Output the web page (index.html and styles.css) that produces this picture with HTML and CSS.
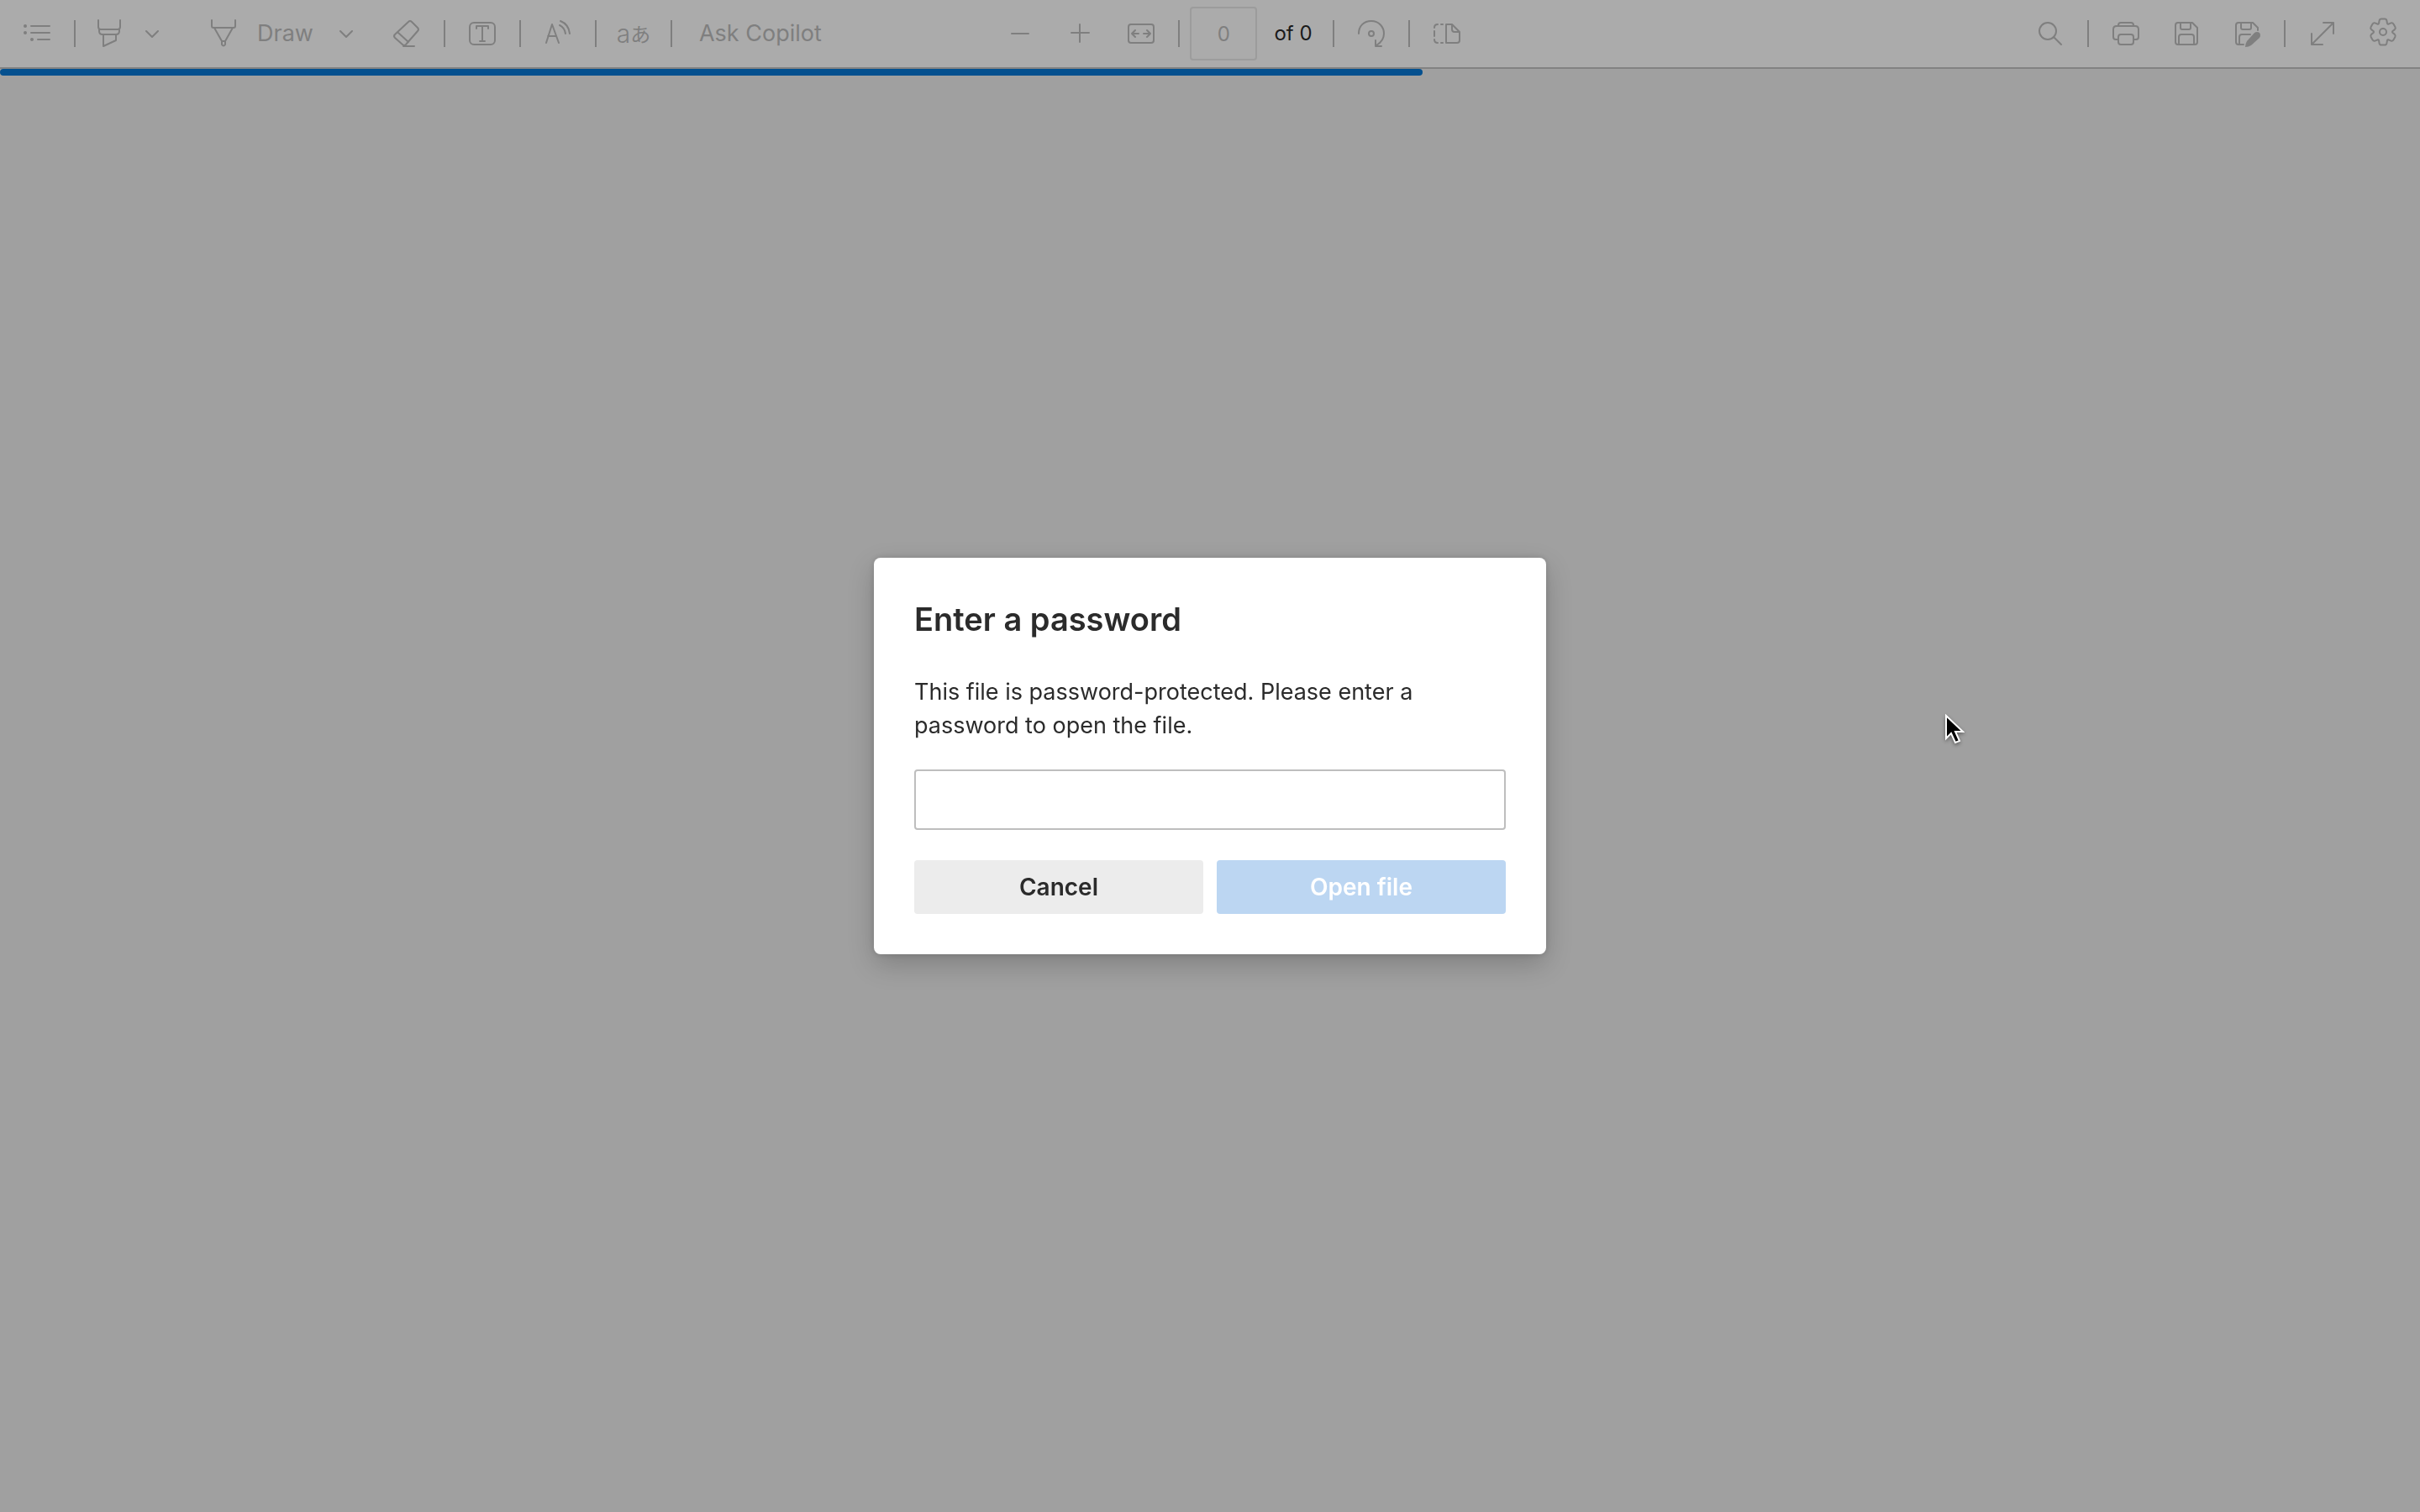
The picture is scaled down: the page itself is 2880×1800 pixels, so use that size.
FILE: index.html
```html
<!DOCTYPE html>
<html lang="en">
<head>
<meta charset="utf-8">
<title>PDF viewer</title>
<link rel="stylesheet" href="styles.css">
</head>
<body>
<header class="toolbar">
  <div class="group group-left">
    <button class="tool list-tool" aria-label="Table of contents" disabled><svg class="icon" viewBox="0 0 32 32"><path d="M9 7h22M9 15h22M17 23h14"/><g class="solid"><circle cx="2" cy="7" r="2"/><circle cx="2" cy="15" r="2"/><circle cx="10" cy="23" r="2"/></g></svg></button>
    <span class="divider divider-narrow"></span>
    <button class="tool" aria-label="Highlight" disabled><svg class="icon" viewBox="0 0 32 32"><path d="M3 0v8q0 3 3 3h20q3 0 3-3V0M4 11v2q0 4 4 4h16q4 0 4-4v-2M9 17v14l15-7v-7"/></svg></button>
    <button class="tool chevron-tool" aria-label="Highlight options" disabled><svg class="chevron" viewBox="0 0 14 14"><path d="M0 4l7 7 7-7"/></svg></button>
    <button class="tool draw-tool" disabled><svg class="icon" viewBox="0 0 32 32"><path d="M2 0v7q0 2 2 2h24q2 0 2-2V0M5 9l9 16h4l9-16M14 25v4q2 3 4 0v-4"/></svg><span>Draw</span></button>
    <button class="tool chevron-tool" aria-label="Draw options" disabled><svg class="chevron" viewBox="0 0 14 14"><path d="M0 4l7 7 7-7"/></svg></button>
    <button class="tool eraser-tool" aria-label="Erase" disabled><svg class="icon" viewBox="0 0 32 32"><path d="M18 2q2-2 4 0l7 7q2 2 0 4L15 29q-2 2-4 0l-9-8q-2-2 0-4zM6 15l12 11M12 31h13"/></svg></button>
    <span class="divider"></span>
    <button class="tool" aria-label="Add text" disabled><svg class="icon" viewBox="0 0 32 32"><rect x="1" y="3" width="30" height="26" rx="5"/><path d="M9 10V7h14v3M16 7v18M13 25h6"/></svg></button>
    <span class="divider"></span>
    <button class="tool" aria-label="Read aloud" disabled><svg class="icon" viewBox="0 0 32 32"><path d="M2 27L9 5l8 22M4 19h10M18 6q6 3 7 10M19 1q10 4 11 15"/></svg></button>
    <span class="divider"></span>
    <button class="tool translate-tool" aria-label="Translate" disabled><span class="latin">a</span><span class="kana" lang="ja">あ</span></button>
    <span class="divider"></span>
    <button class="tool copilot-tool" disabled>Ask Copilot</button>
  </div>
  <div class="group group-center">
    <div class="spaced">
      <button class="tool" aria-label="Zoom out" disabled><svg class="icon" viewBox="0 0 32 32"><path d="M6 16h20"/></svg></button>
      <button class="tool" aria-label="Zoom in" disabled><svg class="icon" viewBox="0 0 32 32"><path d="M5 15h21M15 5v21"/></svg></button>
      <button class="tool" aria-label="Fit to width" disabled><svg class="icon" viewBox="0 0 32 32"><rect x="1" y="5" width="30" height="22" rx="3"/><path d="M13 16H5M9 12l-4 4 4 4M19 16h8M23 12l4 4-4 4"/></svg></button>
    </div>
    <span class="divider divider-page"></span>
    <label class="page-field"><input class="page-input" type="text" value="0" aria-label="Page number" disabled><span>of 0</span></label>
    <span class="divider divider-wide"></span>
    <button class="tool" aria-label="Rotate" disabled><svg class="icon" viewBox="0 0 32 32"><path d="M1 16C1 7 7 1 16 1c9 0 15 7 15 15 0 6-4 11-9 14M21 24v7h7"/><circle cx="16" cy="16" r="3"/></svg></button>
    <span class="divider"></span>
    <button class="tool" aria-label="Page view" disabled><svg class="icon" viewBox="0 0 32 32"><path d="M15 5h7l9 9v10q0 3-3 3H15zM22 5v6q0 3 3 3h6M11 5h-2M5 5q-4 0-4 4M1 13v6M1 23q0 4 4 4M9 27h2"/></svg></button>
  </div>
  <div class="group group-right">
    <button class="tool" aria-label="Find" disabled><svg class="icon" viewBox="0 0 32 32"><circle cx="13" cy="13" r="10"/><path d="M20 20l9 9"/></svg></button>
    <span class="divider"></span>
    <div class="spaced">
      <button class="tool" aria-label="Print" disabled><svg class="icon" viewBox="0 0 32 32"><path d="M7 7V6q0-3 3-3h12q3 0 3 3v1M7 23H4q-3 0-3-3v-9q0-4 4-4h22q4 0 4 4v9q0 3-3 3h-3"/><rect x="7" y="17" width="18" height="12" rx="3"/></svg></button>
      <button class="tool" aria-label="Save" disabled><svg class="icon" viewBox="0 0 32 32"><path d="M6 3h17l6 6v17q0 3-3 3H6q-3 0-3-3V6q0-3 3-3zM9 3v6q0 2 2 2h8q2 0 2-2V3M7 29V20q0-3 3-3h12q3 0 3 3v9"/></svg></button>
      <button class="tool" aria-label="Save as" disabled><svg class="icon" viewBox="0 0 32 32"><path d="M12 29H6q-3 0-3-3V6q0-3 3-3h17l6 6v3M9 3v6q0 2 2 2h8q2 0 2-2V3M7 29V20q0-3 3-3h10"/><path class="solid" d="M25 15q3-2 6 0 2 3 0 6L21 30q-3 2-7 2 0-4 2-7z"/></svg></button>
    </div>
    <span class="divider"></span>
    <div class="spaced">
      <button class="tool" aria-label="Full screen" disabled><svg class="icon" viewBox="0 0 32 32"><path d="M17 3h12v13M3 16v13h13M29 3L3 29"/></svg></button>
      <button class="tool" aria-label="Settings" disabled><svg class="icon" viewBox="-16 -14 32 32"><path d="M-5-10L-4.400-13.500Q-4-15.500-2-15.500H2Q4-15.500 4.400-13.500L5-10Q5.400-9 6.200-9.300L9.500-10.600Q11.400-11.200 12.400-9.500L14.400-6Q15.400-4.300 13.900-2.900L11.200-.7Q10.600 0 11.200.7L13.900 2.900Q15.400 4.300 14.400 6L12.400 9.500Q11.400 11.200 9.500 10.600L6.200 9.300Q5.400 9 5 10L4.400 13.500Q4 15.500 2 15.500H-2Q-4 15.500-4.400 13.500L-5 10Q-5.400 9-6.200 9.300L-9.500 10.600Q-11.400 11.200-12.400 9.500L-14.400 6Q-15.400 4.300-13.900 2.900L-11.200.7Q-10.600 0-11.200-.7L-13.900-2.900Q-15.400-4.300-14.400-6L-12.400-9.500Q-11.400-11.200-9.500-10.600L-6.200-9.300Q-5.400-9-5-10z"/><circle r="4"/></svg></button>
    </div>
  </div>
</header>
<main class="viewer">
  <div class="progress"></div>
</main>
<div class="overlay">
  <form class="dialog" role="dialog" aria-labelledby="title">
    <h1 class="title" id="title">Enter a password</h1>
    <label class="message" for="password">This file is password-protected. Please enter a password to open the file.</label>
    <input class="password" id="password" type="password">
    <div class="actions">
      <button class="action cancel" type="button">Cancel</button>
      <button class="action open" type="submit" disabled>Open file</button>
    </div>
  </form>
</div>
<svg class="cursor" viewBox="0 0 24 36"><path d="M2 2v27l6-6 5 11 5-2-5-11h9z"/></svg>
</body>
</html>
```
FILE: styles.css
```css
* { box-sizing: border-box; }
body {
  margin: 0;
  min-height: 100vh;
  display: flex;
  flex-direction: column;
  background: #a0a0a0;
  color: #1a1a1a;
  font: 27px/40px Inter, "Liberation Sans", sans-serif;
}
button, input { font: inherit; margin: 0; padding: 0; border: 0; }

/* Toolbar */
.toolbar {
  display: grid;
  grid-template-columns: 1fr auto 1fr;
  height: 82px;
  background: #ababab;
  border-bottom: 2px solid #828282;
}
.group { display: flex; align-items: center; }
.group-left { padding-left: 28px; }
.group-center { padding-left: 56px; }
.group-right { justify-content: flex-end; padding-right: 28px; }
.spaced { display: flex; gap: 40px; }
.tool {
  display: flex;
  align-items: center;
  background: none;
  color: #7f7f7f;
  white-space: nowrap;
}
.icon { width: 32px; height: 32px; overflow: visible; }
.chevron { width: 14px; height: 14px; overflow: visible; }
.icon, .chevron { display: block; fill: none; stroke: #7f7f7f; stroke-width: 2; stroke-linejoin: round; stroke-linecap: round; }
.solid { fill: #7f7f7f; stroke: none; }
.divider { width: 2px; height: 32px; margin: 0 28px; background: #7f7f7f; flex: none; }
.divider-narrow { margin-right: 24px; }
.divider-page { margin-right: 12px; }
.divider-wide { margin-left: 24px; }
.chevron-tool { padding-left: 28px; }
.draw-tool { gap: 24px; padding: 0 4px 0 62px; }
.eraser-tool { padding-left: 49px; }
.copilot-tool { padding-left: 4px; }
.translate-tool { width: 32px; justify-content: center; font-weight: 300; }
.latin { font-size: 30px; }
.kana { font: 24px/40px "Noto Sans CJK JP", sans-serif; }
.page-field { display: flex; align-items: center; gap: 20px; font-size: 24px; }
.page-input {
  width: 80px;
  height: 64px;
  border: 2px solid #9c9c9c;
  border-radius: 4px;
  background: #ababab;
  color: #7f7f7f;
  text-align: center;
}

/* Page area */
.viewer { flex: 1; }
.progress { width: 58.8%; height: 8px; border-radius: 4px; background: #04508f; }

/* Password dialog */
.overlay {
  position: fixed;
  inset: 0;
  display: flex;
  align-items: center;
  justify-content: center;
}
.dialog {
  display: flex;
  flex-direction: column;
  width: 800px;
  padding: 48px;
  border-radius: 8px;
  background: #fff;
  color: #2b2b2b;
  box-shadow: 0 12px 32px rgba(0, 0, 0, 0.2), 0 0 8px rgba(0, 0, 0, 0.14);
}
.title { margin: 0; font-size: 38px; line-height: 50px; font-weight: 600; }
.message { margin: 42px 0 32px; }
.password { height: 72px; padding: 0 16px; border: 2px solid #bebebe; border-radius: 4px; background: #fff; }
.actions { display: grid; grid-template-columns: 1fr 1fr; gap: 16px; margin-top: 36px; }
.action { height: 64px; border-radius: 4px; font-size: 28px; font-weight: 600; }
.cancel { background: #ececec; color: #2b2b2b; }
.open { background: #bcd6f2; color: #fff; }

/* Mouse pointer */
.cursor { position: fixed; left: 2314px; top: 850px; width: 24px; height: 36px; fill: #000; stroke: #fff; stroke-width: 2; filter: drop-shadow(0 2px 2px rgba(0, 0, 0, 0.4)); }
```
